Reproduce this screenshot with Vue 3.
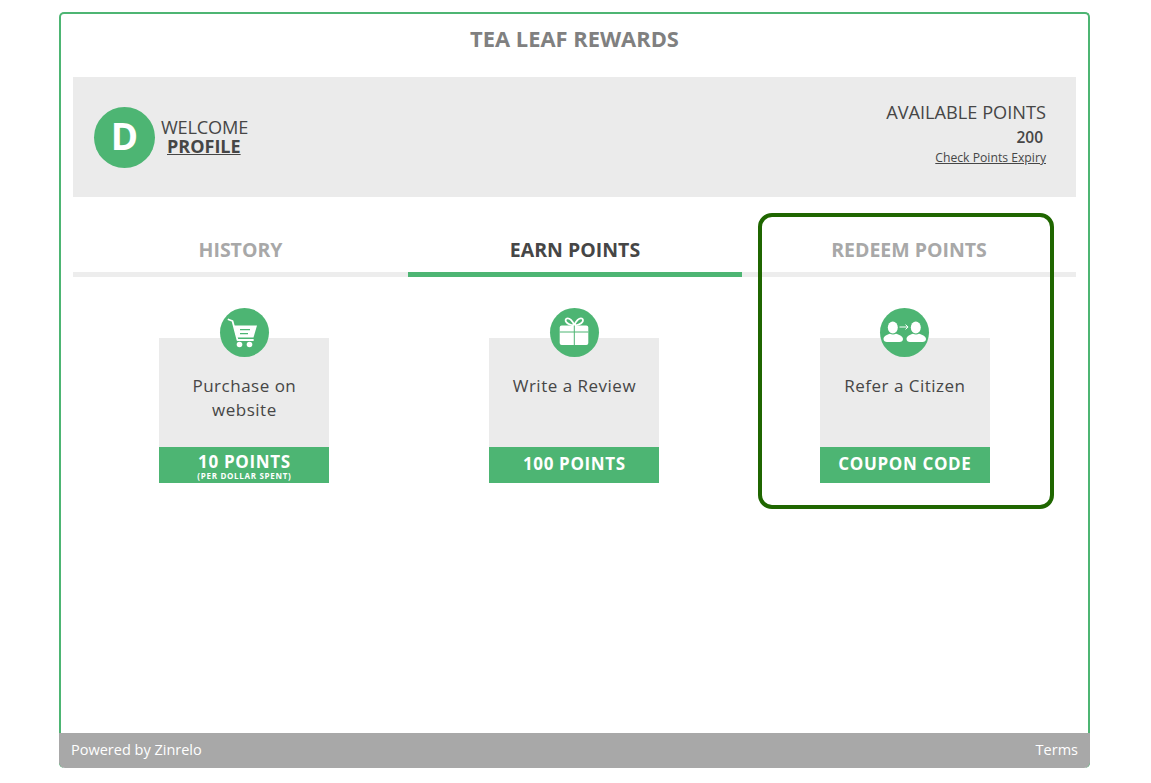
<script setup>
const tabs = [
  { label: 'HISTORY', active: false },
  { label: 'EARN POINTS', active: true },
  { label: 'REDEEM POINTS', active: false },
]
const cards = [
  { id: 'cart', title: 'Purchase on website', points: '10 POINTS', sub: '(PER DOLLAR SPENT)' },
  { id: 'gift', title: 'Write a Review', points: '100 POINTS' },
  { id: 'refer', title: 'Refer a Citizen', points: 'COUPON CODE' },
]
</script>

<template>
  <div class="page">
    <div class="frame">
      <div class="content">
        <h1 class="title">TEA LEAF REWARDS</h1>
        <section class="banner">
          <div class="user">
            <div class="avatar">D</div>
            <div class="hello">
              <div class="welcome">WELCOME</div>
              <a class="profile">PROFILE</a>
            </div>
          </div>
          <div class="balance">
            <div class="avail">AVAILABLE POINTS</div>
            <div class="num">200</div>
            <a class="expiry">Check Points Expiry</a>
          </div>
        </section>
        <nav class="tabs">
          <div v-for="t in tabs" :key="t.label" class="tab" :class="{ active: t.active }">{{ t.label }}</div>
        </nav>
        <section class="cards">
          <div v-for="c in cards" :key="c.id" class="cell">
            <article class="card">
              <div class="badge">
                <svg v-if="c.id === 'cart'" viewBox="0 0 49 49" width="49" height="49">
                  <path d="M8.5 11.5l4 1.5L17.5 32H33" fill="none" stroke="#fff" stroke-width="1.8" stroke-linecap="round" stroke-linejoin="round"/>
                  <path d="M13.5 17.5H37L33.5 29.5H16.5z" fill="#fff"/>
                  <path d="M20 21.7h10M20 25.7h8" stroke="#4db573" stroke-width="1.3"/>
                  <circle cx="19.5" cy="36.5" r="2.8" fill="#fff"/>
                  <circle cx="29.5" cy="36.5" r="2.8" fill="#fff"/>
                </svg>
                <svg v-else-if="c.id === 'gift'" viewBox="0 0 49 49" width="49" height="49">
                  <path d="M24.3 17.5c-1.5-4.5-5-8-7.5-7-2.5 1.1-1.5 6 7.5 7zM24.3 17.5c1.5-4.5 5-8 7.5-7 2.5 1.1 1.5 6-7.5 7z" fill="none" stroke="#fff" stroke-width="1.8"/>
                  <rect x="9.7" y="17.5" width="28.6" height="19.5" rx="2" fill="#fff"/>
                  <path d="M24.3 17.5V37M9.7 24h28.6" stroke="#4db573" stroke-width="1"/>
                </svg>
                <svg v-else viewBox="0 0 49 49" width="49" height="49">
                  <ellipse cx="12.8" cy="19.5" rx="5" ry="6" fill="#fff"/>
                  <path d="M3.5 31c0-3 4-4.6 6.5-5.3 1.6 1 4.4 1 6 0 2.5.7 7 2.3 7 5.3 0 2-1.5 3-3.5 3H7c-2 0-3.5-1-3.5-3z" fill="#fff"/>
                  <ellipse cx="35.8" cy="19.5" rx="5" ry="6" fill="#fff"/>
                  <path d="M26.5 31c0-3 4-4.6 6.5-5.3 1.6 1 4.4 1 6 0 2.5.7 7 2.3 7 5.3 0 2-1.5 3-3.5 3H30c-2 0-3.500-1-3.500-3z" fill="#fff"/>
                  <path d="M19.5 19h8.500M25.500 16.600l2.600 2.400-2.600 2.400" fill="none" stroke="#fff" stroke-width="1"/>
                </svg>
              </div>
              <div class="card-title">{{ c.title }}</div>
              <div class="points" :class="{ stacked: c.sub }">
                <div class="pts">{{ c.points }}</div>
                <div v-if="c.sub" class="sub">{{ c.sub }}</div>
              </div>
            </article>
          </div>
        </section>
      </div>
      <footer class="foot">
        <span>Powered by Zinrelo</span>
        <span>Terms</span>
      </footer>
    </div>
    <div class="highlight"></div>
  </div>
</template>

<style>
html, body { margin: 0; background: #fff; }
</style>

<style scoped>
.page {
  position: relative;
  width: 1151px;
  height: 783px;
  padding: 12px 61px 15px 59px;
  box-sizing: border-box;
  font-family: "Open Sans", "Liberation Sans", sans-serif;
  color: #464646;
  overflow: hidden;
}
.frame {
  height: 756px;
  box-sizing: border-box;
  border: 2px solid #4db573;
  border-bottom: 0;
  border-radius: 5px;
  display: flex;
  flex-direction: column;
  position: relative;
}
.content { flex: 1; padding: 0 12px; }
.title {
  margin: 0;
  height: 63px;
  padding-top: 10px;
  box-sizing: border-box;
  text-align: center;
  font-size: 21.9px;
  line-height: 30px;
  font-weight: 700;
  color: #808080;
}
.banner {
  height: 120px;
  background: #ebebeb;
  display: flex;
  justify-content: space-between;
  padding: 0 30px 0 21px;
  box-sizing: border-box;
}
.user { display: flex; align-items: center; padding-top: 1px; }
.avatar {
  width: 61px;
  height: 61px;
  border-radius: 50%;
  background: #4db573;
  color: #fff;
  font-weight: 700;
  font-size: 37px;
  line-height: 57px;
  text-align: center;
}
.hello { margin-left: 6px; margin-top: -3px; }
.welcome { font-size: 18.2px; line-height: 20px; letter-spacing: -0.2px; }
.profile {
  display: block;
  margin-left: 6px;
  font-size: 18px;
  line-height: 18px;
  font-weight: 700;
  text-decoration: underline;
}
.balance { text-align: right; padding-top: 23px; }
.avail { font-size: 18.2px; line-height: 24px; }
.num { font-size: 15.5px; line-height: 24px; padding-top: 1px; font-weight: 600; margin-right: 3px; }
.expiry { display: block; font-size: 12.2px; line-height: 17px; text-decoration: underline; }
.tabs { display: grid; grid-template-columns: 335px 334px 334px; margin-top: 33px; }
.tab {
  height: 47px;
  box-sizing: border-box;
  border-bottom: 5px solid #ededed;
  text-align: center;
  font-size: 19.5px;
  line-height: 40px;
  font-weight: 700;
  color: #a8a8a8;
}
.tab.active { color: #464646; border-bottom-color: #4db573; }
.cards {
  display: grid;
  grid-template-columns: repeat(3, 330px);
  margin: 61px 0 0 6.4px;
}
.cell { display: flex; justify-content: center; }
.cell:last-child { padding-left: 1px; }
.card {
  position: relative;
  width: 170px;
  height: 145px;
  background: #ebebeb;
  display: flex;
  flex-direction: column;
}
.badge {
  position: absolute;
  left: 60.5px;
  top: -30px;
  width: 49px;
  height: 49px;
  border-radius: 50%;
  background: #4db573;
}
.badge svg { display: block; }
.card-title {
  flex: 1;
  padding: 36px 20px 0;
  text-align: center;
  font-size: 17px;
  line-height: 24px;
  letter-spacing: 0.5px;
}
.points {
  height: 36px;
  background: #4db573;
  color: #fff;
  text-align: center;
  font-weight: 700;
  font-size: 17px;
  line-height: 34px;
  letter-spacing: 0.65px;
}
.stacked .pts { line-height: 20px; padding-top: 5px; }
.sub { font-size: 8px; line-height: 8px; letter-spacing: 0.7px; }
.foot {
  margin: 0 -2px;
  height: 35px;
  background: #a8a8a8;
  border-radius: 0 0 6px 6px;
  color: #fff;
  display: flex;
  justify-content: space-between;
  align-items: center;
  padding: 0 12px 2px;
  box-sizing: border-box;
  font-size: 14.5px;
}
.highlight {
  position: absolute;
  left: 758px;
  top: 213px;
  width: 296px;
  height: 296px;
  box-sizing: border-box;
  border: 4px solid #1f6600;
  border-radius: 14px;
}
</style>
